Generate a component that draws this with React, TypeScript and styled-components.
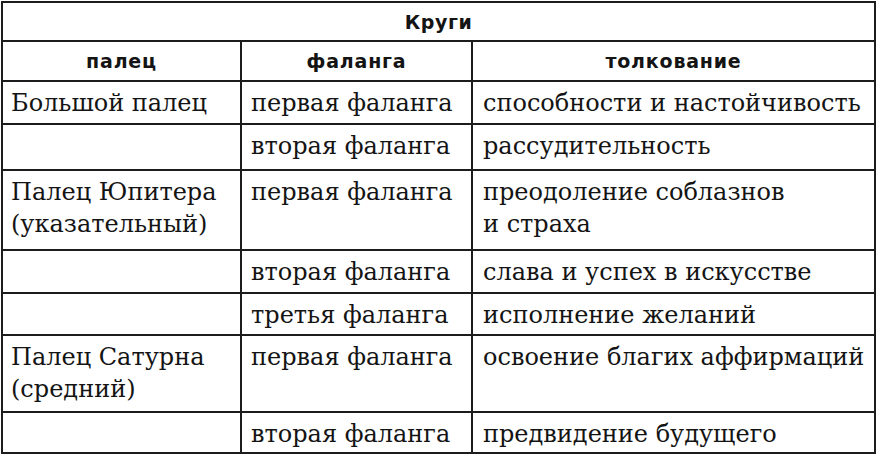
import React from "react";
import styled, { createGlobalStyle } from "styled-components";

const GlobalStyle = createGlobalStyle`
  html, body {
    margin: 0;
    padding: 0;
    background: #ffffff;
  }
`;

const Page = styled.div`
  width: 876px;
  height: 456px;
  padding: 1px 2px 0 1px;
  box-sizing: border-box;
  background: #ffffff;
  overflow: hidden;
`;

const Table = styled.table`
  width: 873px;
  border-collapse: collapse;
  border: 2px solid #1c1c1c;
  table-layout: fixed;
  color: #141414;
`;

const Title = styled.th`
  height: 37px;
  padding: 0;
  border: 2px solid #1c1c1c;
  font-family: "DejaVu Sans", sans-serif;
  font-weight: 700;
  font-size: 19px;
  letter-spacing: 0.6px;
  text-align: center;
`;

const HeadCell = styled.th`
  height: 38px;
  padding: 0;
  border: 2px solid #1c1c1c;
  font-family: "DejaVu Sans", sans-serif;
  font-weight: 700;
  font-size: 19px;
  letter-spacing: 0.8px;
  text-align: center;
`;

const BodyRow = styled.tr<{ $h: number }>`
  height: ${(p) => p.$h}px;
`;

const Cell = styled.td<{ $pad: number }>`
  vertical-align: top;
  padding: 5px 4px 0 ${(p) => p.$pad}px;
  border: 2px solid #1c1c1c;
  font-family: "DejaVu Serif", serif;
  font-size: 24px;
  line-height: 32px;
  white-space: nowrap;
  overflow: hidden;
`;

type Row = { h: number; finger?: string[]; phalanx: string; meaning: string[] };

const rows: Row[] = [
  { h: 43, finger: ["Большой палец"], phalanx: "первая фаланга", meaning: ["способности и настойчивость"] },
  { h: 46, phalanx: "вторая фаланга", meaning: ["рассудительность"] },
  {
    h: 80,
    finger: ["Палец Юпитера", "(указательный)"],
    phalanx: "первая фаланга",
    meaning: ["преодоление соблазнов", "и страха"],
  },
  { h: 43, phalanx: "вторая фаланга", meaning: ["слава и успех в искусстве"] },
  { h: 42, phalanx: "третья фаланга", meaning: ["исполнение желаний"] },
  {
    h: 77,
    finger: ["Палец Сатурна", "(средний)"],
    phalanx: "первая фаланга",
    meaning: ["освоение благих аффирмаций"],
  },
  { h: 41, phalanx: "вторая фаланга", meaning: ["предвидение будущего"] },
];

const Lines = ({ lines }: { lines?: string[] }) => (
  <>
    {(lines || []).map((l, i) => (
      <div key={i}>{l}</div>
    ))}
  </>
);

export default function App() {
  return (
    <Page>
      <GlobalStyle />
      <Table>
        <colgroup>
          <col style={{ width: 239 }} />
          <col style={{ width: 231 }} />
          <col style={{ width: 403 }} />
        </colgroup>
        <thead>
          <tr>
            <Title colSpan={3}>Круги</Title>
          </tr>
          <tr>
            <HeadCell>палец</HeadCell>
            <HeadCell>фаланга</HeadCell>
            <HeadCell>толкование</HeadCell>
          </tr>
        </thead>
        <tbody>
          {rows.map((r, i) => (
            <BodyRow key={i} $h={r.h}>
              <Cell $pad={8}>
                <Lines lines={r.finger} />
              </Cell>
              <Cell $pad={9}>{r.phalanx}</Cell>
              <Cell $pad={10}>
                <Lines lines={r.meaning} />
              </Cell>
            </BodyRow>
          ))}
        </tbody>
      </Table>
    </Page>
  );
}
